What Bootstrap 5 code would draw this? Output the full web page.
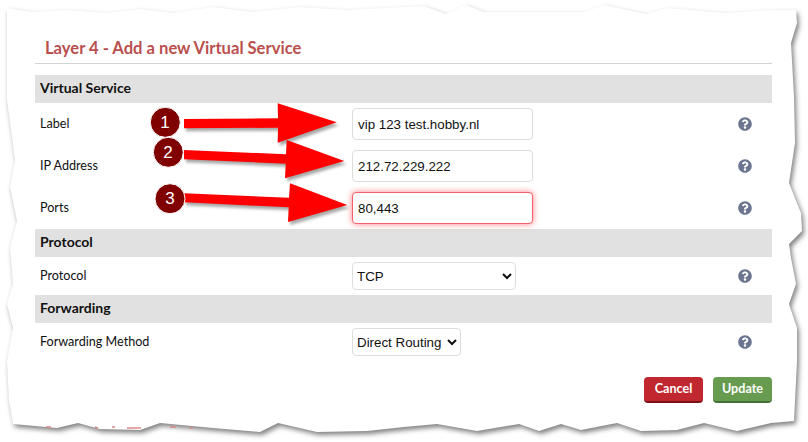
<!DOCTYPE html>
<html lang="en">

<head>
    <meta charset="UTF-8">
    <meta name="viewport" content="width=device-width, initial-scale=1.0">
    <title>Layer 4 - Add a new Virtual Service</title>
    <link href="https://cdn.jsdelivr.net/npm/bootstrap@5.3.2/dist/css/bootstrap.min.css" rel="stylesheet">

    <style>
        body {
            background: #fff;
            font-family: Lato, "Noto Sans", sans-serif;
            color: #111;
            overflow: hidden;
        }

        .shot {
            width: 808px;
            height: 442px;
            overflow: hidden;
        }

        .paper,
        .callouts {
            position: absolute;
            top: 0;
            left: 0;
        }

        .paper-edge {
            filter: drop-shadow(2px 3px 2.5px rgba(0, 0, 0, .5));
        }

        .callouts {
            z-index: 2;
        }

        .callout-arrow {
            fill: #f00;
            filter: drop-shadow(2px 3px 1.5px rgba(0, 0, 0, .35));
        }

        .callout-dot {
            fill: #800000;
            stroke: #fff;
            stroke-width: 1;
        }

        .callout-num {
            fill: #fff;
            font: 17px "Liberation Sans", sans-serif;
            text-anchor: middle;
        }

        .sheet {
            z-index: 1;
            padding: 38px 36px 0 35px;
        }

        .sheet-title {
            font-size: 16.6px;
            font-weight: 700;
            line-height: 20px;
            color: #b9504e;
            margin: 0 0 5px 10px;
        }

        .sheet-rule {
            border-top: 1px solid #d4d4d4;
            margin-bottom: 11px;
        }

        .band {
            background: #e1e1e1;
            height: 28px;
            line-height: 26px;
            padding-left: 5px;
            font-size: 14px;
            font-weight: 700;
        }

        .line {
            padding: 5px 0;
            font-size: 12.6px;
        }

        .line-label {
            width: 317px;
            padding-left: 5px;
        }

        .line-field {
            flex: 1;
        }

        .field-text {
            width: 181px;
            height: 32px;
            border: 1px solid #ddd;
            border-radius: 4px;
            padding: 0 4px 0 5px;
            font: 13.33px "Liberation Sans", sans-serif;
            color: #111;
        }

        .field-text.is-hot {
            border-color: #f4606a;
            box-shadow: 0 0 6px rgba(255, 60, 70, .65);
        }

        .field-pick {
            height: 28px;
            border: 1px solid #ddd;
            border-radius: 4px;
            background: #fff;
            padding: 0;
            font: 13.33px "Liberation Sans", sans-serif;
            color: #111;
        }

        .pick-proto {
            width: 164px;
        }

        .pick-fwd {
            width: 109px;
        }

        .help-mark {
            width: 14px;
            height: 14px;
            margin-right: 20px;
            fill: #6c7590;
        }

        .action-btn {
            width: 59px;
            height: 26px;
            padding: 0;
            border: 0;
            border-bottom: 2px solid;
            border-radius: 4px;
            color: #fff;
            font-size: 12.6px;
            font-weight: 700;
        }

        .action-cancel {
            background: #c1272f;
            border-color: #7d1319;
        }

        .action-update {
            background: #679c50;
            border-color: #44703a;
        }

        .action-row {
            gap: 10px;
        }
    </style>
</head>

<body class="m-0">
    <div class="shot position-relative">
        <!-- torn paper behind the form -->
        <svg class="paper" width="808" height="442" viewBox="0 0 808 442">
            <polygon class="paper-edge" fill="#fff" points="7,8 33,12 67,10 107,13 140,9 173,13 213,7 253,12 300,7 347,10 404,7 424,6 446,14 466,5 484,12 537,12 584,12 604,5 646,14 667,8 726,13 771,10 796,10 797,23 791,43 794,97 795,143 789,183 801,213 802,231 789,244 791,258 796,284 789,304 797,328 797,361 794,421 771,423 737,431 704,423 677,430 641,431 617,423 581,430 561,424 539,431 519,424 477,431 437,424 404,427 367,431 317,432 278,423 260,432 213,428 160,423 140,430 100,429 78,423 57,428 13,424 9,401 7,361 13,328 7,304 13,284 10,248 17,221 10,187 15,160 7,100 7,63"/>
            <path d="M46 427h5M95 427l3 1M112 427h3M127 428h14M170 427h6M190 428h3" stroke="#d98a88" stroke-width="1.5" fill="none"/>
        </svg>

        <div class="sheet position-relative">
            <h1 class="sheet-title">Layer 4 - Add a new Virtual Service</h1>
            <div class="sheet-rule"></div>

            <div class="band">Virtual Service</div>
            <div class="line d-flex align-items-center">
                <div class="line-label">Label</div>
                <div class="line-field"><input class="field-text" type="text" value="vip 123 test.hobby.nl"></div>
                <svg class="help-mark" viewBox="0 0 512 512"><use href="#q"/></svg>
            </div>
            <div class="line d-flex align-items-center">
                <div class="line-label">IP Address</div>
                <div class="line-field"><input class="field-text" type="text" value="212.72.229.222"></div>
                <svg class="help-mark" viewBox="0 0 512 512"><use href="#q"/></svg>
            </div>
            <div class="line d-flex align-items-center">
                <div class="line-label">Ports</div>
                <div class="line-field"><input class="field-text is-hot" type="text" value="80,443"></div>
                <svg class="help-mark" viewBox="0 0 512 512"><use href="#q"/></svg>
            </div>

            <div class="band">Protocol</div>
            <div class="line d-flex align-items-center">
                <div class="line-label">Protocol</div>
                <div class="line-field">
                    <select class="field-pick pick-proto d-block">
                        <option selected>TCP</option>
                        <option>UDP</option>
                    </select>
                </div>
                <svg class="help-mark" viewBox="0 0 512 512"><use href="#q"/></svg>
            </div>

            <div class="band">Forwarding</div>
            <div class="line d-flex align-items-center">
                <div class="line-label">Forwarding Method</div>
                <div class="line-field">
                    <select class="field-pick pick-fwd d-block">
                        <option selected>Direct Routing</option>
                        <option>NAT</option>
                    </select>
                </div>
                <svg class="help-mark" viewBox="0 0 512 512"><use href="#q"/></svg>
            </div>

            <div class="action-row d-flex justify-content-end mt-3">
                <button class="btn action-btn action-cancel" type="button">Cancel</button>
                <button class="btn action-btn action-update" type="button">Update</button>
            </div>
        </div>

        <!-- numbered arrows drawn over the form -->
        <svg class="callouts" width="808" height="442" viewBox="0 0 808 442">
            <defs>
                <path id="q" d="M504 256c0 136.997-111.043 248-248 248S8 392.997 8 256C8 119.083 119.043 8 256 8s248 111.083 248 248zM262.655 90c-54.497 0-89.255 22.957-116.549 63.758-3.536 5.286-2.353 12.415 2.715 16.258l34.699 26.31c5.205 3.947 12.621 3.008 16.665-2.122 17.864-22.658 30.113-35.797 57.303-35.797 20.429 0 45.698 13.148 45.698 32.958 0 14.976-12.363 22.667-32.534 33.976C247.128 238.528 216 254.941 216 296v4c0 6.627 5.373 12 12 12h56c6.627 0 12-5.373 12-12v-1.333c0-28.462 83.186-29.647 83.186-106.667 0-58.002-60.165-102-116.531-102zM256 338c-25.365 0-46 20.635-46 46 0 25.364 20.635 46 46 46s46-20.636 46-46c0-25.365-20.635-46-46-46z"/>
            </defs>
            <polygon class="callout-arrow" points="184,119 278,118.3 277.7,103.3 336.7,122.3 277.7,142.7 278,127.7 184,128.3"/>
            <polygon class="callout-arrow" points="184,150 286,154.3 286.7,140 344.3,161 285,178.3 285.7,163.7 184,159.3"/>
            <polygon class="callout-arrow" points="184,193.3 289,197.7 290,183.3 347.3,205 288,222 288.7,207.3 184,202.3"/>
            <circle class="callout-dot" cx="165.3" cy="122.3" r="15"/>
            <circle class="callout-dot" cx="168.3" cy="152.3" r="15"/>
            <circle class="callout-dot" cx="170" cy="198.7" r="15"/>
            <text class="callout-num" x="165" y="128">1</text>
            <text class="callout-num" x="168" y="158">2</text>
            <text class="callout-num" x="170" y="204">3</text>
        </svg>
    </div>

    <script src="https://cdn.jsdelivr.net/npm/bootstrap@5.3.2/dist/js/bootstrap.bundle.min.js"></script>
</body>

</html>
